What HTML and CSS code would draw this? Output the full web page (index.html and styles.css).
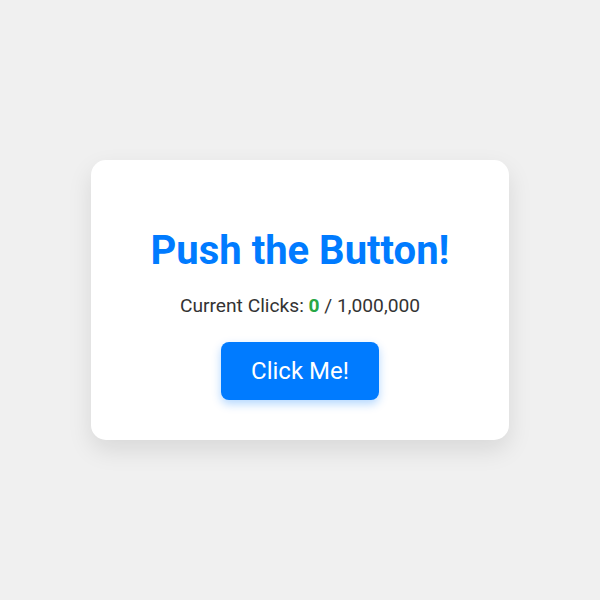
FILE: index.html
```html
<!DOCTYPE html>
<html lang="en">
<head>
<meta charset="utf-8">
<title>Push the Button!</title>
<link rel="stylesheet" href="styles.css">
</head>
<body>
  <div class="card">
    <h1 class="title">Push the Button!</h1>
    <p class="counter">Current Clicks: <span class="count">0</span> / 1,000,000</p>
    <button class="btn" type="button">Click Me!</button>
  </div>
</body>
</html>
```
FILE: styles.css
```css
html, body {
  margin: 0;
  height: 100%;
}
body {
  background: #f0f0f0;
  font-family: Roboto, "Liberation Sans", sans-serif;
  display: flex;
  align-items: center;
  justify-content: center;
}
.card {
  background: #ffffff;
  border-radius: 15px;
  padding: 40px 60px;
  box-shadow: 0 10px 25px rgba(0, 0, 0, 0.1);
  text-align: center;
  display: flex;
  flex-direction: column;
  align-items: center;
}
.title {
  font-size: 40px;
  font-weight: 700;
  color: #007bff;
  margin: 27px 0 20px;
}
.counter {
  font-size: 19.2px;
  color: #333333;
  margin: 0 0 25px;
}
.count {
  color: #28a745;
  font-weight: 700;
}
.btn {
  font-family: Roboto, "Liberation Sans", sans-serif;
  font-size: 24px;
  color: #ffffff;
  background: #007bff;
  border: none;
  border-radius: 8px;
  padding: 15px 30px;
  box-shadow: 0 4px 10px rgba(0, 123, 255, 0.3);
  cursor: pointer;
}
```
